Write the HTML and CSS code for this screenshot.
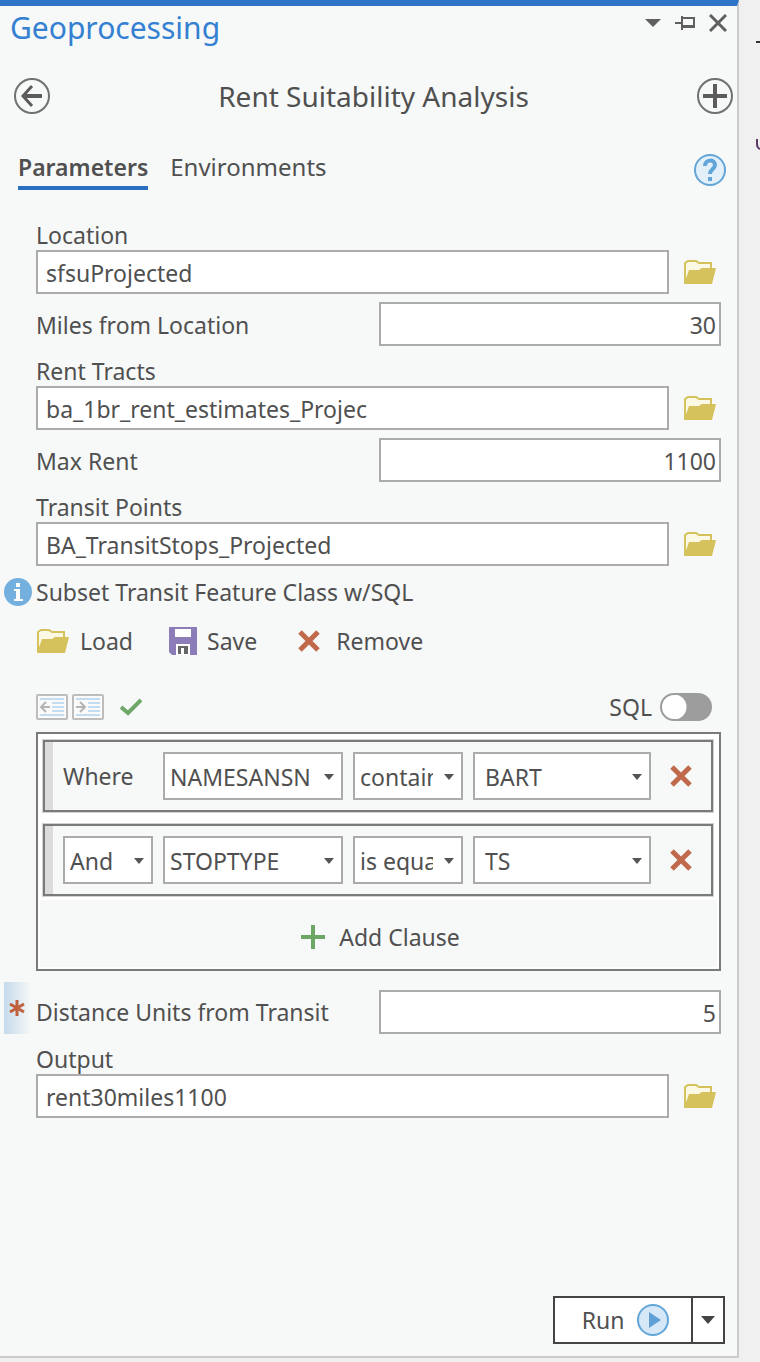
FILE: index.html
```html
<!DOCTYPE html>
<html lang="en">
<head>
<meta charset="utf-8">
<title>Geoprocessing</title>
<link rel="stylesheet" href="styles.css">
</head>
<body>
<svg class="defs" aria-hidden="true">
  <symbol id="folder" viewBox="0 0 34 26">
    <path d="M2 24V4l3-2h8l3 2h12v5" fill="#fbf8e4" stroke="#d6c25c" stroke-width="2"/>
    <path d="M1 25 6 11h10l3-2h14l-4 16z" fill="#d6c25c"/>
  </symbol>
  <symbol id="cross" viewBox="0 0 22 22">
    <path d="M2 2 20 20M20 2 2 20" fill="none" stroke="#c0694b" stroke-width="5"/>
  </symbol>
</svg>
<main class="panel">
  <header class="titlebar">
    <h1 class="title">Geoprocessing</h1>
    <div class="window-tools">
      <button class="plain" aria-label="Menu"><svg width="16" height="8" viewBox="0 0 16 8"><path d="M0 0h16L8 8z" fill="#5f5f5f"/></svg></button>
      <button class="plain" aria-label="Auto hide"><svg width="20" height="16" viewBox="0 0 20 16"><path d="M0 8h6M7 1v14M7 3h12v9H7M7 11h12" fill="none" stroke="#5f5f5f" stroke-width="2"/></svg></button>
      <button class="plain" aria-label="Close"><svg width="18" height="18" viewBox="0 0 18 18"><path d="m1 1 16 16M17 1 1 17" fill="none" stroke="#5f5f5f" stroke-width="3"/></svg></button>
    </div>
  </header>
  <div class="tool-head">
    <button class="plain" aria-label="Back"><svg width="38" height="38" viewBox="0 0 38 38"><circle cx="19" cy="19" r="17" fill="none" stroke="#707070" stroke-width="2"/><path d="M29 19H11" fill="none" stroke="#5c5c5c" stroke-width="4"/><path d="m19 9-9 10 9 10" fill="none" stroke="#5c5c5c" stroke-width="3"/></svg></button>
    <h2 class="tool-name">Rent Suitability Analysis</h2>
    <button class="plain" aria-label="Add"><svg width="38" height="38" viewBox="0 0 38 38"><circle cx="19" cy="19" r="17" fill="none" stroke="#707070" stroke-width="2"/><path d="M19 7v24M7 19h24" fill="none" stroke="#5c5c5c" stroke-width="4"/></svg></button>
  </div>
  <nav class="tabs">
    <button class="tab tab-active">Parameters</button>
    <button class="tab">Environments</button>
    <button class="plain help" aria-label="Help"><svg width="34" height="34" viewBox="0 0 34 34"><circle cx="17" cy="17" r="15" fill="#e3f0fa" stroke="#62a5d8" stroke-width="2"/><path d="M12 13c0-7 10-7 10-1 0 4-5 4-5 9" fill="none" stroke="#62a5d8" stroke-width="4"/><path d="M15 24h4v4h-4z" fill="#62a5d8"/></svg></button>
  </nav>

  <form class="form">
    <label class="label" for="location">Location</label>
    <div class="file-row">
      <input class="box" id="location" type="text" value="sfsuProjected">
      <button class="plain" type="button" aria-label="Browse location"><svg width="34" height="26"><use href="#folder"/></svg></button>
    </div>
    <div class="number-row">
      <label for="miles">Miles from Location</label>
      <input class="box number" id="miles" type="text" value="30">
    </div>
    <label class="label" for="tracts">Rent Tracts</label>
    <div class="file-row">
      <input class="box" id="tracts" type="text" value="ba_1br_rent_estimates_Projec">
      <button class="plain" type="button" aria-label="Browse tracts"><svg width="34" height="26"><use href="#folder"/></svg></button>
    </div>
    <div class="number-row">
      <label for="rent">Max Rent</label>
      <input class="box number" id="rent" type="text" value="1100">
    </div>
    <label class="label" for="transit">Transit Points</label>
    <div class="file-row">
      <input class="box" id="transit" type="text" value="BA_TransitStops_Projected">
      <button class="plain" type="button" aria-label="Browse transit points"><svg width="34" height="26"><use href="#folder"/></svg></button>
    </div>

    <div class="query-title">
      <svg width="28" height="28" viewBox="0 0 28 28"><circle cx="14" cy="14" r="14" fill="#74b0de"/><path d="M12 5h4v4h-4zM10 11h6v10h3v2h-9v-2h2v-8h-2z" fill="#fff"/></svg>
      <span>Subset Transit Feature Class w/SQL</span>
    </div>
    <div class="query-files">
      <button class="plain action" type="button"><svg width="34" height="26"><use href="#folder"/></svg>Load</button>
      <button class="plain action" type="button"><svg width="28" height="28" viewBox="0 0 28 28"><path d="M0 0h28v28H3l-3-3z" fill="#8c7cb8"/><path d="M6 2h16v8H6zM7 17h14v11H7z" fill="#fff"/><path d="M9 19h10v8h-4v-6h-3v6H9z" fill="#666"/></svg>Save</button>
      <button class="plain action remove" type="button"><svg width="22" height="22"><use href="#cross"/></svg>Remove</button>
    </div>
    <div class="query-tools">
      <button class="plain" type="button" aria-label="Outdent"><svg width="32" height="26" viewBox="0 0 32 26"><rect x="1" y="1" width="30" height="24" rx="1" fill="#fafafa" stroke="#bdbdbd" stroke-width="2"/><path d="M4 5h24M16 9h12M16 13h12M16 17h12M4 21h24" stroke="#c4dcf0" stroke-width="2"/><path d="M14 13H5m5-5-5 5 5 5" fill="none" stroke="#b4b4b4" stroke-width="2"/></svg></button>
      <button class="plain" type="button" aria-label="Indent"><svg width="32" height="26" viewBox="0 0 32 26"><rect x="1" y="1" width="30" height="24" rx="1" fill="#fafafa" stroke="#bdbdbd" stroke-width="2"/><path d="M4 5h24M16 9h12M16 13h12M16 17h12M4 21h24" stroke="#c4dcf0" stroke-width="2"/><path d="M4 13h9M8 8l5 5-5 5" fill="none" stroke="#b4b4b4" stroke-width="2"/></svg></button>
      <button class="plain verify" type="button" aria-label="Verify"><svg width="22" height="18" viewBox="0 0 22 18"><path d="m1 9 7 6L21 2" fill="none" stroke="#6fa768" stroke-width="4"/></svg></button>
      <label class="sql">SQL <input class="switch" type="checkbox" role="switch"></label>
    </div>

    <div class="query">
      <div class="clauses">
        <div class="clause">
          <span>Where</span>
          <div class="pick"><select aria-label="Field"><option>NAMESANSN</option></select></div>
          <div class="pick"><select aria-label="Operator"><option>contains the text</option></select></div>
          <div class="pick pick-value"><select aria-label="Value"><option>BART</option></select></div>
          <button class="plain" type="button" aria-label="Delete clause"><svg width="22" height="22"><use href="#cross"/></svg></button>
        </div>
        <div class="clause">
          <div class="pick"><select aria-label="Join"><option>And</option></select></div>
          <div class="pick"><select aria-label="Field"><option>STOPTYPE</option></select></div>
          <div class="pick"><select aria-label="Operator"><option>is equal to</option></select></div>
          <div class="pick pick-value"><select aria-label="Value"><option>TS</option></select></div>
          <button class="plain" type="button" aria-label="Delete clause"><svg width="22" height="22"><use href="#cross"/></svg></button>
        </div>
      </div>
      <button class="plain add" type="button"><svg width="24" height="24" viewBox="0 0 24 24"><path d="M12 0v24M0 12h24" stroke="#6da564" stroke-width="4"/></svg>Add Clause</button>
    </div>

    <div class="number-row required">
      <span class="marker"><svg width="16" height="16" viewBox="0 0 16 16"><path d="M8 0v16M1 4l14 8M15 4 1 12" stroke="#c0603c" stroke-width="3"/></svg></span>
      <label for="distance">Distance Units from Transit</label>
      <input class="box number" id="distance" type="text" value="5">
    </div>
    <label class="label" for="output">Output</label>
    <div class="file-row">
      <input class="box" id="output" type="text" value="rent30miles1100">
      <button class="plain" type="button" aria-label="Browse output"><svg width="34" height="26"><use href="#folder"/></svg></button>
    </div>
  </form>

  <footer class="footer">
    <div class="run">
      <button class="run-main">Run <svg width="34" height="34" viewBox="0 0 34 34"><circle cx="17" cy="17" r="15" fill="#d6e8f7" stroke="#62a5d8" stroke-width="2"/><path d="M13 9v16l12-8z" fill="#5f9fd3"/></svg></button>
      <button class="run-menu" aria-label="Run options"><svg width="14" height="8" viewBox="0 0 14 8"><path d="M0 0h14L7 8z" fill="#444"/></svg></button>
    </div>
  </footer>
</main>
<aside class="edge">
  <svg width="4" height="112" viewBox="0 0 4 112"><path d="M0 2h4" stroke="#333" stroke-width="2"/><path d="M1 99v5q0 4 3 5" fill="none" stroke="#5a3a66" stroke-width="2"/></svg>
</aside>
</body>
</html>
```
FILE: styles.css
```css
* { box-sizing: border-box; }

body {
  margin: 0;
  min-height: 100vh;
  display: grid;
  grid-template-columns: minmax(0, 1fr) 21px;
  background: #f0f0f0;
  color: #505050;
  font: 23px/28px "Noto Sans", "Open Sans", sans-serif;
}

.defs { position: absolute; width: 0; height: 0; }
svg { display: block; flex: none; }

button, input, select { font: inherit; color: inherit; }
button { cursor: pointer; }

.plain {
  display: flex;
  align-items: center;
  padding: 0;
  border: 0;
  background: none;
}

.panel {
  display: flex;
  flex-direction: column;
  margin-bottom: 4px;
  border-top: 6px solid #2e74c9;
  border-right: 2px solid #cbcbcb;
  border-bottom: 2px solid #cbcbcb;
  background: #f7f9f8;
}

.titlebar {
  display: flex;
  justify-content: space-between;
  padding: 2px 10px 0;
  height: 52px;
}

.title {
  margin: 0;
  color: #3480d2;
  font-size: 30px;
  font-weight: 400;
  line-height: 40px;
}

.window-tools {
  display: flex;
  align-items: center;
  gap: 14px;
  height: 30px;
}

.tool-head {
  display: flex;
  align-items: center;
  justify-content: space-between;
  padding: 0 3px 0 13px;
  height: 76px;
}

.tool-name {
  margin: 0;
  font-size: 28px;
  font-weight: 400;
  line-height: 40px;
}

.tabs {
  display: flex;
  align-items: flex-start;
  gap: 22px;
  padding: 18px 10px 0 18px;
  height: 88px;
}

.tab {
  padding: 0 0 4px;
  border: 0;
  border-bottom: 4px solid transparent;
  background: none;
  font-size: 24px;
  line-height: 30px;
}

.tab-active {
  border-color: #2a6fc0;
  font-size: 23px;
  font-weight: 600;
}

.help {
  margin-left: auto;
  padding-top: 1px;
}

.form { padding: 0 16px 0 36px; }

.label {
  display: block;
  padding-bottom: 2px;
  line-height: 26px;
}

.file-row {
  display: flex;
  align-items: center;
  justify-content: space-between;
  gap: 14px;
  padding-right: 4px;
  margin-bottom: 8px;
}

.box {
  min-width: 0;
  height: 44px;
  padding: 2px 8px 0;
  border: 2px solid #ababab;
  border-radius: 0;
  background: #fff;
}

.file-row .box { flex: 1; }

.number-row {
  display: grid;
  grid-template-columns: 1fr 1fr;
  align-items: center;
  margin-bottom: 12px;
}

.number-row label { padding-top: 2px; }

.number {
  padding: 2px 3px 0;
  text-align: right;
}

.query-title {
  display: flex;
  align-items: center;
  gap: 4px;
  margin: 12px 0 0 -32px;
}

.query-files {
  display: flex;
  align-items: center;
  gap: 36px;
  height: 70px;
}

.action { gap: 10px; }

.remove {
  gap: 16px;
  padding-left: 5px;
}

.query-tools {
  display: flex;
  align-items: center;
  gap: 4px;
  padding: 6px 9px 0 0;
  height: 56px;
}

.verify { margin-left: 12px; }

.sql {
  display: flex;
  align-items: center;
  gap: 8px;
  margin-left: auto;
}

.switch {
  appearance: none;
  width: 52px;
  height: 28px;
  margin: 0;
  border: 2px solid #9d9d9d;
  border-radius: 14px;
  background: radial-gradient(circle at 12px 12px, #fff 12px, #9d9d9d 13px);
}

.query {
  padding: 2px;
  border: 2px solid #7a7a7a;
  background: #fff;
}

.clauses {
  display: grid;
  gap: 12px;
  padding: 4px 4px 4px 3px;
}

.clause {
  display: grid;
  grid-template-columns: 90fr 180fr 110fr 178fr 40px;
  align-items: center;
  column-gap: 10px;
  height: 72px;
  padding: 0 10px 0 18px;
  border: 2px solid #7a7a7a;
  outline: 1px solid #d2d2d2;
  background: linear-gradient(90deg, #dcdcdc 8px, #f7f9f8 8px);
}

.clause > .plain { justify-content: center; }

.pick { position: relative; min-width: 0; }

.pick select {
  display: block;
  appearance: none;
  width: 100%;
  height: 48px;
  padding: 2px 28px 0 5px;
  border: 2px solid #ababab;
  border-radius: 0;
  background: #fff;
  text-overflow: clip;
}

.pick-value select { padding-left: 10px; }

.pick::after {
  content: "";
  position: absolute;
  top: 22px;
  right: 9px;
  border: 5px solid transparent;
  border-top: 6px solid #555;
  border-bottom: 0;
  pointer-events: none;
}

.add {
  justify-content: center;
  gap: 14px;
  width: 100%;
  height: 67px;
  padding: 6px 0 0 4px;
  background: #f7f9f8;
}

.required {
  grid-template-columns: 32px calc(50% - 16px) 1fr;
  align-items: end;
  margin: 11px 0 12px -32px;
}

.required label {
  padding: 0;
  line-height: 44px;
}

.marker {
  display: flex;
  align-items: center;
  align-self: stretch;
  height: 52px;
  padding-left: 5px;
  background: linear-gradient(90deg, #c6daec, #f7f9f8 28px);
}

.footer {
  display: flex;
  justify-content: flex-end;
  margin-top: auto;
  padding: 24px 12px 12px;
}

.run {
  display: flex;
  height: 48px;
  border: 2px solid #444;
  background: #fff;
}

.run button {
  display: flex;
  align-items: center;
  justify-content: center;
  border: 0;
  background: none;
}

.run-main { gap: 12px; width: 136px; padding: 0 0 0 6px; }
.run .run-menu { width: 32px; padding: 0; border-left: 2px solid #444; }

.edge {
  display: flex;
  justify-content: flex-end;
  padding-top: 40px;
}
```
